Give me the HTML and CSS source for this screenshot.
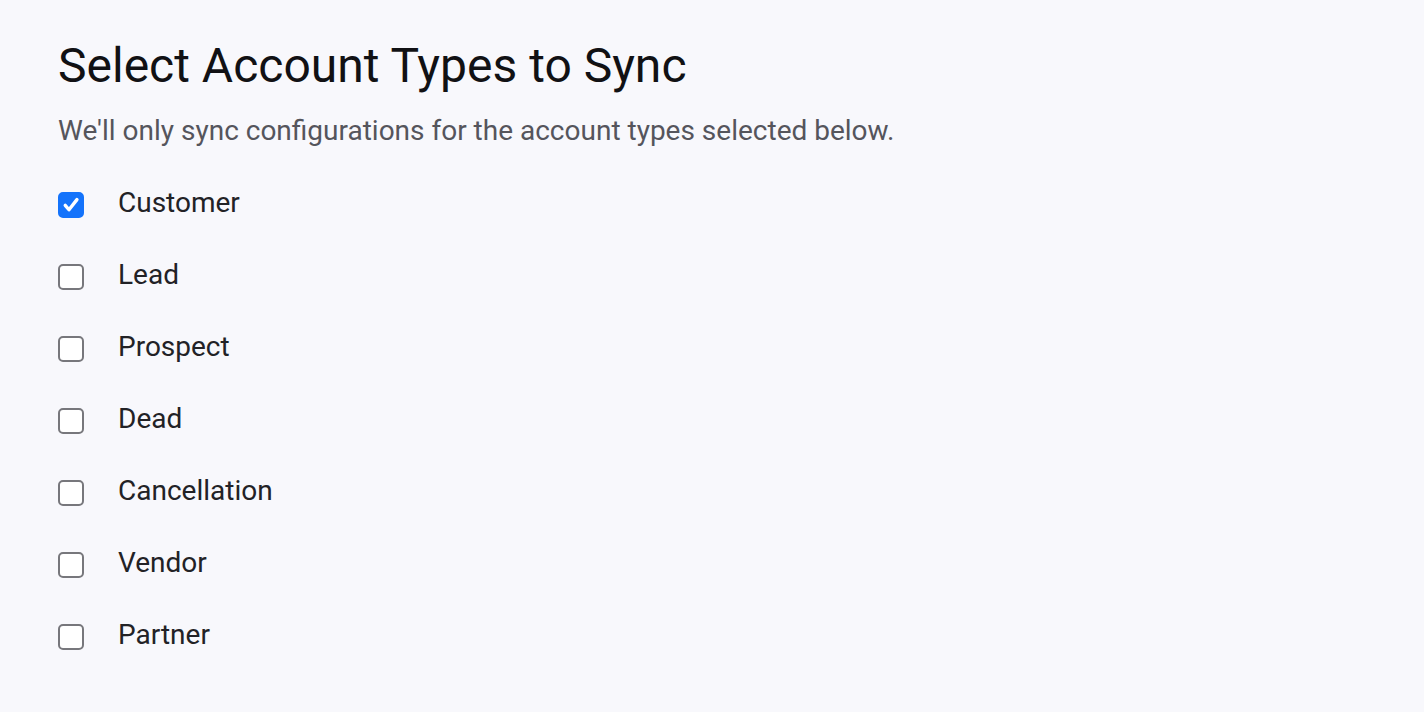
FILE: index.html
```html
<!DOCTYPE html>
<html lang="en">
<head>
    <meta charset="UTF-8">
    <meta name="viewport" content="width=device-width, initial-scale=1.0">
    <title>Select Account Types to Sync</title>
    <link rel="stylesheet" href="styles.css">
</head>
<body>
    <div class="sync-panel">
        <h1 class="title">Select Account Types to Sync</h1>
        <p class="subtitle">We'll only sync configurations for the account types selected below.</p>

        <div class="type-list">
            <label class="type-row">
                <input type="checkbox" class="type-check" checked>
                <span class="type-name">Customer</span>
            </label>
            <label class="type-row">
                <input type="checkbox" class="type-check">
                <span class="type-name">Lead</span>
            </label>
            <label class="type-row">
                <input type="checkbox" class="type-check">
                <span class="type-name">Prospect</span>
            </label>
            <label class="type-row">
                <input type="checkbox" class="type-check">
                <span class="type-name">Dead</span>
            </label>
            <label class="type-row">
                <input type="checkbox" class="type-check">
                <span class="type-name">Cancellation</span>
            </label>
            <label class="type-row">
                <input type="checkbox" class="type-check">
                <span class="type-name">Vendor</span>
            </label>
            <label class="type-row">
                <input type="checkbox" class="type-check">
                <span class="type-name">Partner</span>
            </label>
        </div>
    </div>
</body>
</html>
```

FILE: styles.css
```css
* {
    margin: 0;
    padding: 0;
    box-sizing: border-box;
    font-family: Roboto, 'Liberation Sans', Arial, sans-serif;
}

body {
    background: #f8f8fc;
    min-height: 100vh;
}

.sync-panel {
    padding: 37px 58px 40px;
}

.title {
    font-size: 48px;
    font-weight: 400;
    line-height: 1.2;
    color: #111114;
}

.subtitle {
    margin-top: 19px;
    font-size: 28px;
    line-height: 1.2;
    color: #55555c;
}

.type-list {
    display: flex;
    flex-direction: column;
    margin-top: 19px;
}

.type-row {
    display: flex;
    align-items: center;
    gap: 34px;
    height: 72px;
    cursor: pointer;
}

.type-check {
    appearance: none;
    -webkit-appearance: none;
    width: 26px;
    height: 26px;
    border: 2px solid #77777c;
    border-radius: 5px;
    background: #fff;
    flex-shrink: 0;
    margin-top: 5px;
    cursor: pointer;
}

.type-check:checked {
    border-color: #1473fb;
    background: #1473fb url("data:image/svg+xml,%3Csvg xmlns='http://www.w3.org/2000/svg' viewBox='0 0 26 26'%3E%3Cpath d='M6.2 13.4l4.4 5.2 9.4-12' fill='none' stroke='%23fff' stroke-width='4' stroke-linecap='round' stroke-linejoin='round'/%3E%3C/svg%3E") center / 100% no-repeat;
}

.type-name {
    font-size: 28px;
    line-height: normal;
    color: #222226;
}
```
